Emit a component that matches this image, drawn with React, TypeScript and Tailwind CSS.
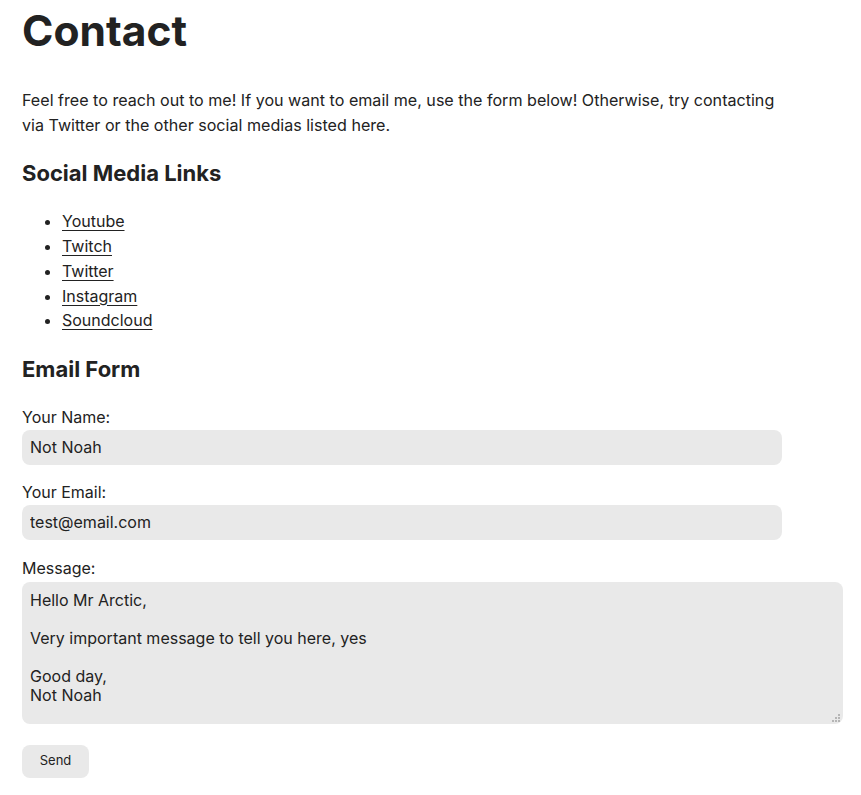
export default function App() {
  const links = ['Youtube', 'Twitch', 'Twitter', 'Instagram', 'Soundcloud']

  return (
    <main className="min-h-screen bg-white px-[22px] text-[#222] font-['Inter',sans-serif]">
      <h1 className="pt-[5px] text-[42.5px] font-bold leading-[1.2]">Contact</h1>

      <p className="mt-[32px] max-w-[762px] text-[16.1px] leading-[25px]">
        Feel free to reach out to me! If you want to email me, use the form below! Otherwise, try contacting via Twitter or the other social medias listed here.
      </p>

      <h2 className="mt-[22px] text-[22px] font-bold leading-[1.2]">Social Media Links</h2>
      <ul className="mt-[23px] list-disc pl-[40px] text-[16px] leading-[24.75px]">
        {links.map((l) => (
          <li key={l}>
            <a href="#" className="underline underline-offset-[3px]">{l}</a>
          </li>
        ))}
      </ul>

      <h2 className="mt-[23px] text-[22px] font-bold leading-[1.2]">Email Form</h2>

      {/* Form */}
      <form className="mt-[25px] flex flex-col" onSubmit={(e) => e.preventDefault()}>
        <label className="text-[16px] leading-[19px]">Your Name:</label>
        <input
          type="text"
          defaultValue="Not Noah"
          className="mt-[3px] h-[35px] w-[760px] rounded-[8px] bg-[#e9e9e9] px-[8px] text-[16px] outline-none"
        />
        <label className="mt-[18px] text-[16px] leading-[19px]">Your Email:</label>
        <input
          type="email"
          defaultValue="test@email.com"
          className="mt-[3px] h-[35px] w-[760px] rounded-[8px] bg-[#e9e9e9] px-[8px] text-[16px] outline-none"
        />
        <label className="mt-[19px] text-[16px] leading-[19px]">Message:</label>
        <div className="relative mt-[4px] w-[821px]">
          <textarea
            defaultValue={'Hello Mr Arctic,\n\nVery important message to tell you here, yes\n\nGood day,\nNot Noah'}
            className="block h-[142px] w-full resize-none rounded-[8px] bg-[#e9e9e9] px-[8px] pt-[9px] pb-[8px] text-[16px] leading-[19px] outline-none"
          />
          {/* resize grip */}
          <svg className="pointer-events-none absolute bottom-[2px] right-[3px]" width="8" height="8" viewBox="0 0 8 8">
            <rect x="6" y="0" width="2" height="2" fill="#b5b5b5" />
            <rect x="3" y="3" width="2" height="2" fill="#b5b5b5" />
            <rect x="6" y="3" width="2" height="2" fill="#b5b5b5" />
            <rect x="0" y="6" width="2" height="2" fill="#b5b5b5" />
            <rect x="3" y="6" width="2" height="2" fill="#b5b5b5" />
            <rect x="6" y="6" width="2" height="2" fill="#b5b5b5" />
          </svg>
        </div>
        <button type="submit" className="mt-[21px] h-[33px] w-[67px] rounded-[8px] bg-[#e9e9e9] text-[13px]">
          Send
        </button>
      </form>
    </main>
  )
}
